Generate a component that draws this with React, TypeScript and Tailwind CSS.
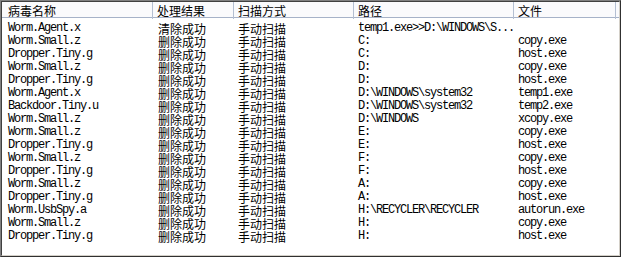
import React from "react";

type Row = { name: string; result: string; mode: string; path: string; file: string };

const rows: Row[] = [
  { name: "Worm.Agent.x", result: "清除成功", mode: "手动扫描", path: "temp1.exe>>D:\\WINDOWS\\S...", file: "" },
  { name: "Worm.Small.z", result: "删除成功", mode: "手动扫描", path: "C:", file: "copy.exe" },
  { name: "Dropper.Tiny.g", result: "删除成功", mode: "手动扫描", path: "C:", file: "host.exe" },
  { name: "Worm.Small.z", result: "删除成功", mode: "手动扫描", path: "D:", file: "copy.exe" },
  { name: "Dropper.Tiny.g", result: "删除成功", mode: "手动扫描", path: "D:", file: "host.exe" },
  { name: "Worm.Agent.x", result: "删除成功", mode: "手动扫描", path: "D:\\WINDOWS\\system32", file: "temp1.exe" },
  { name: "Backdoor.Tiny.u", result: "删除成功", mode: "手动扫描", path: "D:\\WINDOWS\\system32", file: "temp2.exe" },
  { name: "Worm.Small.z", result: "删除成功", mode: "手动扫描", path: "D:\\WINDOWS", file: "xcopy.exe" },
  { name: "Worm.Small.z", result: "删除成功", mode: "手动扫描", path: "E:", file: "copy.exe" },
  { name: "Dropper.Tiny.g", result: "删除成功", mode: "手动扫描", path: "E:", file: "host.exe" },
  { name: "Worm.Small.z", result: "删除成功", mode: "手动扫描", path: "F:", file: "copy.exe" },
  { name: "Dropper.Tiny.g", result: "删除成功", mode: "手动扫描", path: "F:", file: "host.exe" },
  { name: "Worm.Small.z", result: "删除成功", mode: "手动扫描", path: "A:", file: "copy.exe" },
  { name: "Dropper.Tiny.g", result: "删除成功", mode: "手动扫描", path: "A:", file: "host.exe" },
  { name: "Worm.UsbSpy.a", result: "删除成功", mode: "手动扫描", path: "H:\\RECYCLER\\RECYCLER", file: "autorun.exe" },
  { name: "Worm.Small.z", result: "删除成功", mode: "手动扫描", path: "H:", file: "copy.exe" },
  { name: "Dropper.Tiny.g", result: "删除成功", mode: "手动扫描", path: "H:", file: "host.exe" },
];

const cols = "grid grid-cols-[151px_81px_120px_160px_102px]";
const mono = "font-[family-name:'Liberation_Mono',monospace] text-[12px] tracking-[-1.2px]";
const cjk = "font-[family-name:'Noto_Sans_CJK_SC',sans-serif] text-[12px]";

const headers = ["病毒名称", "处理结果", "扫描方式", "路径", "文件"];

export default function App() {
  return (
    <div className="w-[621px] h-[257px] bg-white border border-t-[#808080] border-l-[#808080] border-r-[#303030] border-b-[#303030]">
      <div className="h-full border border-t-[#404040] border-l-[#404040] border-r-[#d4d0c8] border-b-[#d4d0c8] text-black">
        <div className={`${cols} h-[16px] bg-[#fafafc] border-b border-[#a6b2c8]`}>
          {headers.map((h, i) => (
            <div
              key={h}
              className={`${cjk} leading-[17px] border-r border-[#b4bfd2] ${i === 0 ? "pl-[6px]" : "pl-[4px]"}`}
            >
              {h}
            </div>
          ))}
        </div>
        <div className="pt-[4px]">
          {rows.map((r, i) => (
            <div key={i} className={`${cols} h-[13px] leading-[13px]`}>
              <div className={`${mono} pl-[6px] whitespace-nowrap`}>{r.name}</div>
              <div className={`${cjk} pl-[5px] whitespace-nowrap`}>{r.result}</div>
              <div className={`${cjk} pl-[4px] whitespace-nowrap`}>{r.mode}</div>
              <div className={`${mono} pl-[4px] whitespace-nowrap`}>{r.path}</div>
              <div className={`${mono} pl-[4px] whitespace-nowrap`}>{r.file}</div>
            </div>
          ))}
        </div>
      </div>
    </div>
  );
}
